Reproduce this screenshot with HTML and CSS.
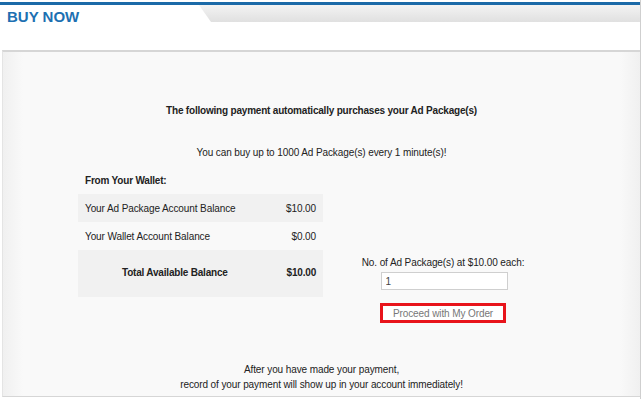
FILE: index.html
```html
<!DOCTYPE html>
<html>
<head>
<meta charset="utf-8">
<link rel="stylesheet" href="styles.css">
</head>
<body>
<div class="frame">
  <div class="topbar"></div>
  <div class="tabrow">
    <div class="tab"><h1 class="title">BUY NOW</h1></div>
    <div class="band"></div>
  </div>
  <div class="headspace"></div>
  <div class="panel">
    <p class="lead">The following payment automatically purchases your Ad Package(s)</p>
    <p class="limit">You can buy up to 1000 Ad Package(s) every 1 minute(s)!</p>
    <div class="cols">
      <div class="wallet">
        <div class="wallet-title">From Your Wallet:</div>
        <div class="row shade"><span>Your Ad Package Account Balance</span><span>$10.00</span></div>
        <div class="row"><span>Your Wallet Account Balance</span><span>$0.00</span></div>
        <div class="row total shade"><span class="total-label">Total Available Balance</span><span>$10.00</span></div>
      </div>
      <div class="order">
        <div class="order-label">No. of Ad Package(s) at $10.00 each:</div>
        <input class="qty" type="text" value="1">
        <button class="proceed">Proceed with My Order</button>
      </div>
    </div>
    <p class="after">After you have made your payment,<br>record of your payment will show up in your account immediately!</p>
  </div>
</div>
</body>
</html>
```
FILE: styles.css
```css
html, body {
  margin: 0;
  padding: 0;
  background: #ffffff;
}
body {
  font-family: "Liberation Sans", Arial, sans-serif;
  font-size: 10px;
  letter-spacing: -0.1px;
  color: #222;
}
.frame {
  width: 641px;
  height: 399px;
  padding-top: 2px;
  box-sizing: border-box;
  border-right: 1px solid #cfcfcf;
}
.topbar {
  height: 3px;
  background: #1b6aa8;
}
.tabrow {
  display: flex;
  height: 17px;
  background: #fff;
}
.tab {
  width: 199px;
  flex: none;
}
.title {
  margin: 0;
  padding: 3px 0 0 7px;
  font-size: 15px;
  line-height: 17px;
  font-weight: bold;
  letter-spacing: 0;
  color: #1d70b2;
  white-space: nowrap;
}
.band {
  flex: 1;
  background: linear-gradient(#f3f3f3, #e0e0e0);
  clip-path: polygon(0 0, 100% 0, 100% 100%, 12px 100%, 0 0);
}
.headspace {
  height: 28px;
  background: #fff;
}
.panel {
  margin-left: 2px;
  height: 347px;
  box-sizing: border-box;
  border-top: 2px solid #d6d6d6;
  border-left: 1px solid #e4e4e4;
  border-bottom: 1px solid #d6d6d6;
  background: linear-gradient(90deg, #f0f0f0 0, #f9f9f9 20px, #f9f9f9 calc(100% - 20px), #f0f0f0 100%);
  padding-top: 52px;
}
.lead {
  margin: 0;
  text-align: center;
  font-weight: bold;
  letter-spacing: -0.2px;
  line-height: 14px;
}
.limit {
  margin: 28px 0 0;
  text-align: center;
  line-height: 14px;
}
.cols {
  display: flex;
  margin-top: 14px;
  padding-left: 75px;
}
.wallet {
  width: 245px;
  flex: none;
}
.wallet-title {
  font-weight: bold;
  letter-spacing: -0.2px;
  padding-left: 7px;
  line-height: 14px;
  height: 20px;
}
.row {
  display: flex;
  justify-content: space-between;
  align-items: center;
  height: 28px;
  padding: 0 7px;
}
.shade { background: #f1f1f1; }
.row.total {
  height: 47px;
  font-weight: bold;
  letter-spacing: -0.2px;
  padding-bottom: 2px;
  box-sizing: border-box;
}
.total-label {
  padding-left: 37px;
}
.order {
  width: 240px;
  flex: none;
  display: flex;
  flex-direction: column;
  align-items: center;
  padding-top: 82px;
}
.order-label {
  line-height: 14px;
}
.qty {
  margin: 2px 0 0 2px;
  width: 127px;
  height: 18px;
  box-sizing: border-box;
  border: 1px solid #cfcfcf;
  background: #fff;
  font-family: "Liberation Sans", Arial, sans-serif;
  font-size: 10px;
  color: #444;
  padding: 0 4px;
}
.proceed {
  margin-top: 13px;
  width: 126px;
  height: 20px;
  box-sizing: border-box;
  border: 3px solid #e8141b;
  background: #fff;
  color: #777;
  font-family: "Liberation Sans", Arial, sans-serif;
  font-size: 10px;
  letter-spacing: -0.1px;
  padding: 0;
}
.after {
  margin: 39px 0 0;
  text-align: center;
  line-height: 15px;
}
```
